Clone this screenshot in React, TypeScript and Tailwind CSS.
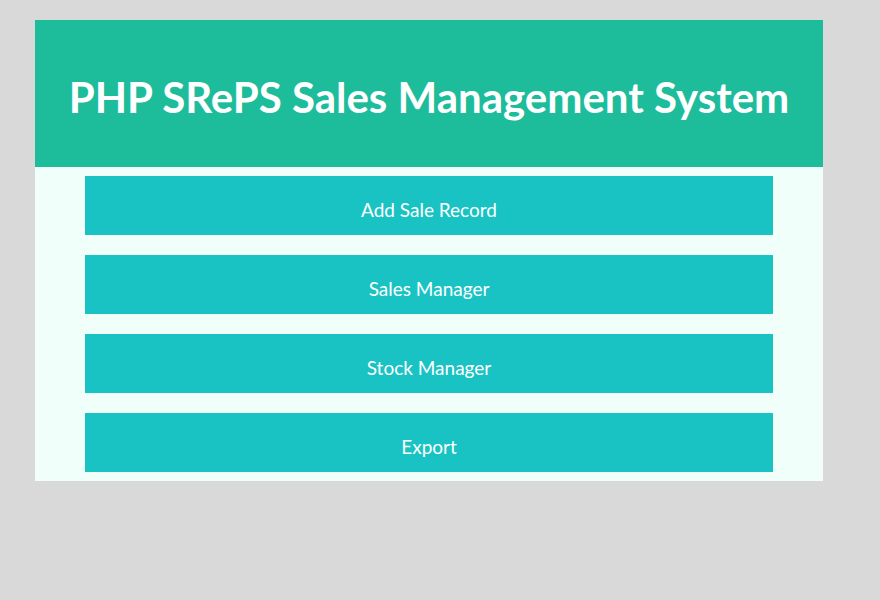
const items = ["Add Sale Record", "Sales Manager", "Stock Manager", "Export"]

const App = () => {
    return (
        <div className="min-h-[600px] w-full bg-[#d9d9d9] pt-[20px] pl-[35px]" style={{ fontFamily: '"Lato", "Open Sans", sans-serif' }}>
            <div className="w-[788px] bg-[#f0fffa]">
                <div className="h-[147px] bg-[#1dbc9b] flex items-center justify-center pt-[6px]">
                    <h1 className="text-white font-bold text-[42px] leading-none">PHP SRePS Sales Management System</h1>
                </div>
                <div className="flex flex-col gap-[20px] px-[50px] pt-[9px] pb-[9px]">
                    {items.map((item) => (
                        <button key={item} className="h-[59px] w-full bg-[#19c3c3] text-white text-[19px] leading-[24px] pt-[8px]">
                            {item}
                        </button>
                    ))}
                </div>
            </div>
        </div>
    )
}

export default App
